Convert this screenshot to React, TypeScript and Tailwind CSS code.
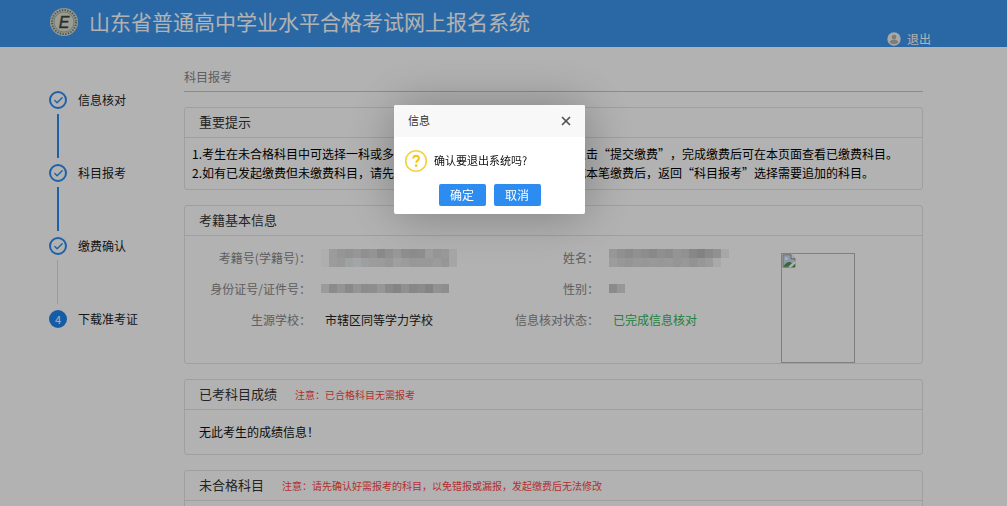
import React from "react";
import { Check, X } from "lucide-react";

const steps = [
  { label: "信息核对", done: true },
  { label: "科目报考", done: true },
  { label: "缴费确认", done: true },
  { label: "下载准考证", done: false },
];

const idMosaic = [
  ["#fafafa", "#dedede", "#d6d6d6", "#d2d2d2", "#d9d9d9", "#cfcfcf", "#d4d4d4", "#c4c4c4", "#d0d0d0", "#dadada", "#cdcdcd", "#cacaca", "#cccccc", "#e2e2e2", "#d8d8d8", "#dcdcdc", "#f0f0f0"],
  ["#fafafa", "#e0e0e0", "#dcdcdc", "#e4e8e8", "#eaeeee", "#e2e6e6", "#e0e0e0", "#dfdfdf", "#d8d8d8", "#e4e4e4", "#e0e0e0", "#dadada", "#dcdcdc", "#dcdcdc", "#e0e0e0", "#d9d9d9", "#eeeeee"],
];
const certMosaic = [
  ["#dedede", "#c8c8c8", "#d4d4d4", "#c4c4c4", "#d6d6d6", "#c9c9c9", "#cccccc", "#d9d9d9", "#c6c6c6", "#bdbdbd", "#cecece", "#c2c2c2", "#c8c8c8", "#bebebe", "#d2d2d2", "#cccccc"],
];
const nameMosaic = [
  ["#d8d8d8", "#cfcfcf", "#c8c8c8", "#d0d0d0", "#cacaca", "#c4c4c4", "#cdcdcd", "#c9c9c9", "#d4d4d4", "#d0d0d0", "#c2c2c2", "#bababa", "#c6c6c6", "#d0d0d0", "#f0f0f0"],
  ["#e0e0e0", "#dadada", "#d6d6d6", "#dadada", "#d8d8d8", "#dcdcdc", "#d9d9d9", "#dcdcdc", "#d6d6d6", "#dadada", "#d2d2d2", "#d8d8d8", "#dedede", "#f2f2f2", "#ffffff"],
];
const genderMosaic = [["#c8c8c8", "#d9d9d9"]];

function Mosaic({ rows, label }: { rows: string[][]; label: string }) {
  const cellWidth = 8;
  const cellHeight = 9;
  return (
    <svg
      role="img"
      aria-label={label}
      width={rows[0].length * cellWidth}
      height={rows.length * cellHeight}
      shapeRendering="crispEdges"
      className="-ml-1 shrink-0"
    >
      {rows.map((row, y) =>
        row.map((fill, x) => (
          <rect
            key={`${x}-${y}`}
            x={x * cellWidth}
            y={y * cellHeight}
            width={cellWidth}
            height={cellHeight}
            fill={fill}
          />
        ))
      )}
    </svg>
  );
}

function Logo() {
  return (
    <svg width="30" height="30" viewBox="0 0 30 30" aria-hidden="true">
      <circle cx="15" cy="15" r="14" fill="#d3d8cc" />
      <circle cx="15" cy="15" r="12" fill="none" stroke="#6f8570" strokeWidth="2" strokeDasharray="1.4 1.3" />
      <circle cx="15" cy="15" r="10" fill="#e0e0d6" stroke="#9aa58f" strokeWidth="0.8" />
      <text
        x="15"
        y="20.5"
        textAnchor="middle"
        fontFamily="Liberation Sans, sans-serif"
        fontSize="16"
        fontStyle="italic"
        fill="#3a463c"
        stroke="#3a463c"
        strokeWidth="0.4"
      >
        E
      </text>
    </svg>
  );
}

function UserIcon() {
  return (
    <svg width="14" height="14" viewBox="0 0 14 14" aria-hidden="true">
      <circle cx="7" cy="7" r="6.7" fill="#f1f1ee" />
      <circle cx="7" cy="5" r="2.3" fill="#b5b2ae" />
      <path d="M2.8 10.8C3 8.4 4.8 7.6 7 7.6s4 .8 4.2 3.2c-2.2 1.6-6.2 1.6-8.4 0z" fill="#b5b2ae" />
    </svg>
  );
}

function BrokenImage() {
  return (
    <svg width="14" height="14" viewBox="0 0 14 14" aria-hidden="true">
      <path d="M1 .8h8l4 4v8.4H1z" fill="#cbdcf5" stroke="#9b9b9b" />
      <path d="M9 .8v4h4" fill="#fff" stroke="#8b8b8b" />
      <path d="M1.5 12.8C3 9.6 5.5 7.6 8 8l2 1-4 3.8z" fill="#4f9a3a" />
      <path d="M13.6 6.2 6.2 13.6h2.6l4.8-4.4z" fill="#fff" />
      <path d="M10 13 13 10v3z" fill="#4f9a3a" />
      <circle cx="4.4" cy="4.6" r="1.4" fill="#fff" />
    </svg>
  );
}

interface CardProps {
  title: string;
  note?: string;
  children?: React.ReactNode;
}

function Card({ title, note, children }: CardProps) {
  return (
    <section className="rounded-[3px] border border-[#e4e4e4]">
      <header className="flex h-[30px] items-center border-b border-[#e4e4e4] px-[14px] pb-px">
        <h2 className="text-[13px] text-[#333]">{title}</h2>
        {note && <p className="ml-[18px] text-[10px] text-[#ff4444]">{note}</p>}
      </header>
      {children}
    </section>
  );
}

function Field({ label, children }: { label: string; children: React.ReactNode }) {
  return (
    <>
      <dt className="pr-[2px] text-right text-[#888]">{label}：</dt>
      <dd className="flex h-[31px] items-center pl-3 text-[#222]">{children}</dd>
    </>
  );
}

function Steps() {
  return (
    <ol className="w-[135px] shrink-0 pt-11 text-xs text-[#222]">
      {steps.map((step, index) => (
        <li key={step.label}>
          <div className="flex h-[18px] items-center">
            {step.done ? (
              <span className="flex size-[18px] items-center justify-center rounded-full border-2 border-[#2d8cf0] text-[#2d8cf0]">
                <Check size={11} strokeWidth={3} />
              </span>
            ) : (
              <span className="flex size-[18px] items-center justify-center rounded-full bg-[#1f85f0] text-[11px] text-white">
                {index + 1}
              </span>
            )}
            <span className="ml-[11px]">{step.label}</span>
          </div>
          {index < steps.length - 1 && (
            <div
              className={
                steps[index + 1].done
                  ? "mt-[5px] mb-[6px] ml-2 h-11 w-[2px] bg-[#2d8cf0]"
                  : "mt-[5px] mb-[6px] ml-2 h-11 w-px bg-[#dcdcdc]"
              }
            />
          )}
        </li>
      ))}
    </ol>
  );
}

function ConfirmDialog() {
  return (
    <div className="fixed inset-0 flex items-start justify-center bg-black/30 pt-[105px] pr-7">
      <div
        role="dialog"
        aria-modal="true"
        aria-labelledby="dialog-title"
        className="w-[191px] rounded-[2px] bg-white pb-2 shadow-[1px_1px_50px_rgba(0,0,0,0.3)]"
      >
        <div className="flex h-8 items-center justify-between rounded-t-[2px] bg-[#f8f8f8] pr-3 pb-px pl-[14px]">
          <h2 id="dialog-title" className="text-[11px] text-[#333]">
            信息
          </h2>
          <button type="button" aria-label="关闭" className="text-[#555]">
            <X size={14} strokeWidth={3} />
          </button>
        </div>
        <div className="flex h-[47px] items-center px-[10px]">
          <svg width="24" height="24" viewBox="0 0 24 24" fill="none" aria-hidden="true">
            <circle cx="12" cy="12" r="10.3" stroke="#f6d043" strokeWidth="1.6" />
            <path d="M9.2 9.6c0-1.8 1.2-2.8 2.8-2.8s2.9 1 2.9 2.6c0 2-2.7 2-2.7 4.4" stroke="#f5c518" strokeWidth="2" />
            <circle cx="12.1" cy="16.6" r="1.3" fill="#f5c518" />
          </svg>
          <p className="ml-[6px] text-[11px] text-[#111]">确认要退出系统吗?</p>
        </div>
        <div className="flex justify-center gap-2">
          <button type="button" className="h-[22px] w-[47px] rounded-[2px] bg-[#2d8cf0] text-xs text-white">
            确定
          </button>
          <button type="button" className="h-[22px] w-[47px] rounded-[2px] bg-[#2d8cf0] text-xs text-white">
            取消
          </button>
        </div>
      </div>
    </div>
  );
}

export default function App() {
  return (
    <div
      lang="zh-CN"
      className="h-screen overflow-hidden bg-white font-['Noto_Sans_CJK_SC',sans-serif] [text-spacing-trim:space-all]"
    >
      <header className="flex h-[47px] justify-between bg-[#3d96ec] pr-[76px] pl-[49px] text-white">
        <div className="flex h-[43px] items-center gap-[10px]">
          <Logo />
          <h1 className="text-[21px]">山东省普通高中学业水平合格考试网上报名系统</h1>
        </div>
        <a href="#logout" className="flex h-4 items-center gap-[6px] self-end text-xs">
          <UserIcon />
          退出
        </a>
      </header>

      <div className="flex pr-[84px] pl-[49px]">
        <Steps />
        <main className="min-w-0 flex-1">
          <p className="mb-[15px] border-b border-[#c8c8c8] pt-[21px] pb-[5px] text-xs leading-[18px] text-[#888]">
            科目报考
          </p>
          <div className="flex flex-col gap-[15px]">
            <Card title="重要提示">
              <div className="pt-[6px] pb-[7px] pl-[7px] text-xs leading-[19px] whitespace-nowrap text-black">
                <p>
                  1.考生在未合格科目中可选择一科或多科进行报考，选择好报考科目后，点击“提交缴费”，完成缴费后可在本页面查看已缴费科目。
                </p>
                <p>
                  2.如有已发起缴费但未缴费科目，请先完成缴费或撤销已有的订单，待完成本笔缴费后，返回“科目报考”选择需要追加的科目。
                </p>
              </div>
            </Card>

            <Card title="考籍基本信息">
              <div className="flex items-start">
                <dl className="grid flex-1 grid-cols-[128px_8fr_128px_9fr] items-center pt-[6px] text-xs">
                  <Field label="考籍号(学籍号)">
                    <Mosaic rows={idMosaic} label="考籍号已遮挡" />
                  </Field>
                  <Field label="姓名">
                    <Mosaic rows={nameMosaic} label="姓名已遮挡" />
                  </Field>
                  <Field label="身份证号/证件号">
                    <Mosaic rows={certMosaic} label="证件号已遮挡" />
                  </Field>
                  <Field label="性别">
                    <Mosaic rows={genderMosaic} label="性别已遮挡" />
                  </Field>
                  <Field label="生源学校">市辖区同等学力学校</Field>
                  <Field label="信息核对状态">
                    <span className="text-[#2fb856]">已完成信息核对</span>
                  </Field>
                </dl>
                <div
                  role="img"
                  aria-label="考生照片"
                  className="mt-[17px] mr-[67px] h-[110px] w-[74px] border border-[#b8b8b8]"
                >
                  <BrokenImage />
                </div>
              </div>
            </Card>

            <Card title="已考科目成绩" note="注意：已合格科目无需报考">
              <p className="px-[14px] py-[13px] text-xs leading-[18px] text-[#111]">无此考生的成绩信息！</p>
            </Card>

            <Card title="未合格科目" note="注意：请先确认好需报考的科目，以免错报或漏报，发起缴费后无法修改">
              <div className="h-16" />
            </Card>
          </div>
        </main>
      </div>

      <ConfirmDialog />
    </div>
  );
}
